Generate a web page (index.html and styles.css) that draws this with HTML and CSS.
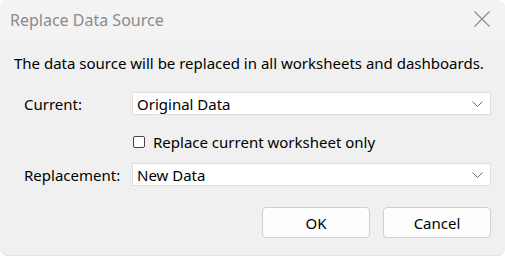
FILE: index.html
```html
<!DOCTYPE html>
<html>
<head>
<meta charset="utf-8">
<link rel="stylesheet" href="styles.css">
</head>
<body>
<div class="window">
  <div class="titlebar">
    <span class="title">Replace Data Source</span>
    <svg class="close" width="16" height="16" viewBox="0 0 16 16"><path d="M0.5 0.5 L15.5 15.5 M15.5 0.5 L0.5 15.5" stroke="#8a8a8a" stroke-width="1.1" fill="none"/></svg>
  </div>
  <div class="content">
    <p class="message">The data source will be replaced in all worksheets and dashboards.</p>
    <div class="form">
      <label class="label">Current:</label>
      <div class="combo"><span>Original Data</span><svg class="chev" width="11" height="6" viewBox="0 0 11 6"><path d="M0.5 0.5 L5.5 5.5 L10.5 0.5" stroke="#6a6a6a" stroke-width="1" fill="none"/></svg></div>
      <span></span>
      <div class="check"><span class="box"></span><span>Replace current worksheet only</span></div>
      <label class="label">Replacement:</label>
      <div class="combo"><span>New Data</span><svg class="chev" width="11" height="6" viewBox="0 0 11 6"><path d="M0.5 0.5 L5.5 5.5 L10.5 0.5" stroke="#6a6a6a" stroke-width="1" fill="none"/></svg></div>
    </div>
    <div class="buttons">
      <button class="btn">OK</button>
      <button class="btn">Cancel</button>
    </div>
  </div>
</div>
</body>
</html>
```
FILE: styles.css
```css
html, body {
  margin: 0;
  padding: 0;
  background: #ffffff;
}
body {
  font-family: "Noto Sans", "Open Sans", sans-serif;
  color: #000;
}
.window {
  box-sizing: border-box;
  width: 505px;
  height: 256px;
  border-radius: 8px;
  background: #f0f0f0;
  box-shadow: inset 0 -1px 0 #e6e6e6;
  overflow: hidden;
  display: flex;
  flex-direction: column;
}
.titlebar {
  height: 40px;
  flex: none;
  background: #f3f3f3;
  display: flex;
  align-items: center;
  justify-content: space-between;
  padding: 0 15px 0 10px;
}
.title {
  font-size: 16px;
  color: #8a8a8a;
  margin-top: -1px;
}
.close {
  display: block;
  margin-top: -2px;
}
.content {
  padding: 0 14px 0 14px;
  display: flex;
  flex-direction: column;
}
.message {
  margin: 13px 0 0 0;
  font-size: 15px;
  line-height: 20px;
}
.form {
  margin-top: 19px;
  padding-left: 10px;
  display: grid;
  grid-template-columns: 108px 1fr;
  grid-template-rows: 23px 48px 23px;
  align-items: center;
  font-size: 15px;
}
.label {
  line-height: 20px;
}
.combo {
  box-sizing: border-box;
  height: 23px;
  background: #fff;
  border: 1px solid #dedede;
  display: flex;
  align-items: center;
  justify-content: space-between;
  padding: 0 7px 0 4px;
  line-height: 20px;
}
.chev {
  display: block;
}
.check {
  display: flex;
  align-items: center;
  gap: 8px;
  line-height: 20px;
  padding-left: 1px;
  margin-top: 5px;
}
.box {
  box-sizing: border-box;
  width: 12px;
  height: 12px;
  border: 1px solid #444;
  border-radius: 2px;
  background: #fff;
}
.buttons {
  margin-top: 21px;
  display: flex;
  justify-content: flex-end;
  gap: 13px;
}
.btn {
  box-sizing: border-box;
  width: 108px;
  height: 31px;
  background: #fdfdfd;
  border: 1px solid #cfcfcf;
  border-radius: 4px;
  font-family: inherit;
  font-size: 15px;
  color: #000;
  padding: 0;
}
```
